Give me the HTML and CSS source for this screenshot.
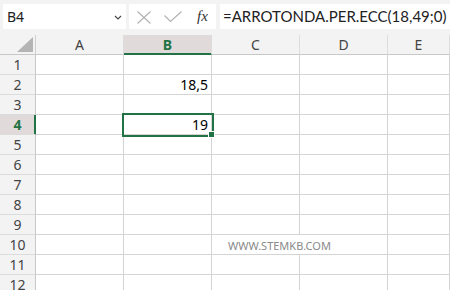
FILE: index.html
```html
<!DOCTYPE html>
<html lang="it">
  <head>
    <meta charset="UTF-8" />
    <meta name="viewport" content="width=device-width, initial-scale=1.0" />
    <title>Foglio</title>
    <link rel="stylesheet" href="styles.css">
  </head>
  <body>
    <div class="toolbar">
      <div class="namebox">
        <span>B4</span>
        <svg class="chevron" width="8" height="5" viewBox="0 0 8 5"><path d="M1 1 L4 4 L7 1" fill="none" stroke="#444" stroke-width="1.1"/></svg>
      </div>
      <div class="fxbox">
        <svg width="14" height="13" viewBox="0 0 14 13"><path d="M0.5 0.5 L13.5 12.5 M13.5 0.5 L0.5 12.5" stroke="#b0b0b0" stroke-width="1.1" fill="none"/></svg>
        <svg width="18" height="12" viewBox="0 0 18 12"><path d="M0.5 4.5 L6.5 10.5 L17.5 0.5" stroke="#b0b0b0" stroke-width="1.1" fill="none"/></svg>
        <span class="fx">fx</span>
      </div>
      <div class="formula">=ARROTONDA.PER.ECC(18,49;0)</div>
    </div>

    <div class="sheet">
      <div class="corner"><span class="triangle"></span></div>
      <div class="colhead">A</div>
      <div class="colhead active">B</div>
      <div class="colhead">C</div>
      <div class="colhead">D</div>
      <div class="colhead">E</div>

      <div class="rowhead">1</div><div class="cell"></div><div class="cell"></div><div class="cell"></div><div class="cell"></div><div class="cell"></div>
      <div class="rowhead">2</div><div class="cell"></div><div class="cell num">18,5</div><div class="cell"></div><div class="cell"></div><div class="cell"></div>
      <div class="rowhead">3</div><div class="cell"></div><div class="cell"></div><div class="cell"></div><div class="cell"></div><div class="cell"></div>
      <div class="rowhead active">4</div><div class="cell"></div><div class="cell num selected">19</div><div class="cell"></div><div class="cell"></div><div class="cell"></div>
      <div class="rowhead">5</div><div class="cell"></div><div class="cell"></div><div class="cell"></div><div class="cell"></div><div class="cell"></div>
      <div class="rowhead">6</div><div class="cell"></div><div class="cell"></div><div class="cell"></div><div class="cell"></div><div class="cell"></div>
      <div class="rowhead">7</div><div class="cell"></div><div class="cell"></div><div class="cell"></div><div class="cell"></div><div class="cell"></div>
      <div class="rowhead">8</div><div class="cell"></div><div class="cell"></div><div class="cell"></div><div class="cell"></div><div class="cell"></div>
      <div class="rowhead">9</div><div class="cell"></div><div class="cell"></div><div class="cell"></div><div class="cell"></div><div class="cell"></div>
      <div class="rowhead">10</div><div class="cell"></div><div class="cell"></div><div class="cell overflow"><span class="watermark">WWW.STEMKB.COM</span></div><div class="cell"></div><div class="cell"></div>
      <div class="rowhead">11</div><div class="cell"></div><div class="cell"></div><div class="cell"></div><div class="cell"></div><div class="cell"></div>
      <div class="rowhead">12</div><div class="cell"></div><div class="cell"></div><div class="cell"></div><div class="cell"></div><div class="cell"></div>
    </div>
  </body>
</html>
```

FILE: styles.css
```css
body {
  margin: 0;
  background: #ffffff;
  font-family: "Noto Sans", "Open Sans", sans-serif;
  overflow: hidden;
}

.toolbar {
  display: flex;
  height: 35px;
  box-sizing: border-box;
  padding: 4px 0 0 3px;
  background: #f3f3f3;
}
.namebox {
  width: 123px;
  height: 25px;
  background: #ffffff;
  display: flex;
  align-items: center;
  justify-content: space-between;
  padding: 0 4px 0 4px;
  box-sizing: border-box;
  font-size: 14px;
  color: #222;
}
.chevron {
  margin-top: 1px;
}
.fxbox {
  width: 87px;
  height: 25px;
  margin-left: 3px;
  background: #ffffff;
  display: flex;
  align-items: center;
  box-sizing: border-box;
  padding-left: 8px;
  gap: 13px;
}
.fxbox svg:first-child {
  margin-top: 1px;
}
.fx {
  font-family: "Liberation Serif", serif;
  font-style: italic;
  font-size: 15px;
  color: #333;
  margin-left: 2px;
}
.formula {
  flex: 1;
  height: 25px;
  margin-left: 4px;
  background: #ffffff;
  line-height: 25px;
  padding-left: 3px;
  font-family: "Lato", "Noto Sans", sans-serif;
  font-size: 15px;
  color: #222;
  white-space: nowrap;
}

.sheet {
  display: grid;
  grid-template-columns: 36px 88px 88px 88px 88px 1fr;
  grid-template-rows: 20px;
  grid-auto-rows: 20px;
  font-size: 14px;
}
.sheet > div {
  box-sizing: border-box;
}
.corner {
  background: #f3f3f3;
  border-right: 1px solid #d0d0d0;
  border-bottom: 1px solid #c8c8c8;
  position: relative;
}
.triangle {
  position: absolute;
  right: 2px;
  bottom: 2px;
  width: 16px;
  height: 15px;
  background: #b4b4b4;
  clip-path: polygon(100% 0, 100% 100%, 0 100%);
}
.colhead {
  background: #f3f3f3;
  border-right: 1px solid #dcdcdc;
  border-bottom: 1px solid #c8c8c8;
  text-align: center;
  line-height: 19px;
  color: #444;
}
.colhead.active {
  background: #e1dada;
  color: #217346;
  font-weight: bold;
  border-bottom-color: #217346;
  box-shadow: inset 0 -1px 0 #217346;
}
.rowhead {
  background: #f3f3f3;
  border-right: 1px solid #c8c8c8;
  border-bottom: 1px solid #dcdcdc;
  text-align: center;
  line-height: 19px;
  color: #444;
}
.rowhead.active {
  background: #e1dada;
  color: #217346;
  font-weight: bold;
  border-right-color: #217346;
  box-shadow: inset -1px 0 0 #217346;
}
.cell {
  border-right: 1px solid #d4d4d4;
  border-bottom: 1px solid #d4d4d4;
  line-height: 19px;
  padding: 0 3px;
  color: #000;
}
.num {
  text-align: right;
}
.selected {
  position: relative;
  z-index: 1;
  outline: 2px solid #217346;
}
.selected::after {
  content: "";
  position: absolute;
  right: -4px;
  bottom: -4px;
  width: 5px;
  height: 5px;
  background: #217346;
  border: 1px solid #ffffff;
}
.overflow {
  border-right: none;
  position: relative;
  z-index: 1;
  white-space: nowrap;
}
.watermark {
  padding-left: 13px;
  font-size: 11px;
  color: #8a8a8a;
}
```
